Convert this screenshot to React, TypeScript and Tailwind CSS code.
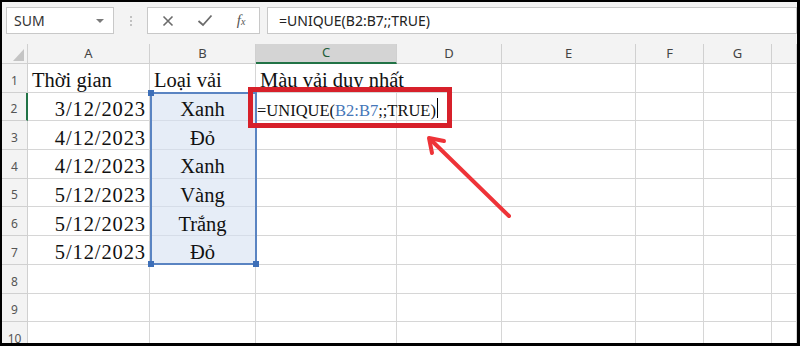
import React from "react";

const cols = [
  { key: "A", w: 122 },
  { key: "B", w: 106 },
  { key: "C", w: 141 },
  { key: "D", w: 105 },
  { key: "E", w: 134 },
  { key: "F", w: 68 },
  { key: "G", w: 68 },
  { key: "", w: 25 },
];

const data: [string, string][] = [
  ["3/12/2023", "Xanh"],
  ["4/12/2023", "Đỏ"],
  ["4/12/2023", "Xanh"],
  ["5/12/2023", "Vàng"],
  ["5/12/2023", "Trắng"],
  ["5/12/2023", "Đỏ"],
];

const serif = "font-['Liberation_Serif','Times_New_Roman',serif]";
const sans = "font-['Noto_Sans','Open_Sans',sans-serif]";

function Toolbar() {
  return (
    <div className="flex h-[42px] shrink-0 items-start gap-0 bg-[#f3f3f3] pt-[5px]">
      {/* Name box */}
      <div className="ml-[4px] flex h-[27px] w-[108px] items-center justify-between border border-[#c8c8c8] bg-white pl-[7px] pr-[8px]">
        <span className={`${sans} text-[14px] text-[#333]`}>SUM</span>
        <svg width="10" height="6" viewBox="0 0 10 6">
          <path d="M1 1 L5 5 L9 1 Z" fill="#7a7a7a" />
        </svg>
      </div>
      {/* separator */}
      <div className="flex h-[27px] w-[33px] flex-col items-center justify-center gap-[2px]">
        <span className="h-[2px] w-[2px] rounded-full bg-[#b0b0b0]" />
        <span className="h-[2px] w-[2px] rounded-full bg-[#b0b0b0]" />
        <span className="h-[2px] w-[2px] rounded-full bg-[#b0b0b0]" />
      </div>
      {/* Cancel / enter / fx */}
      <div className="flex h-[27px] w-[113px] items-center border border-[#c8c8c8] bg-white">
        <div className="flex w-[38px] justify-center pl-[2px]">
          <svg width="12" height="12" viewBox="0 0 12 12">
            <path d="M1.5 1.5 L10.5 10.5 M10.5 1.5 L1.5 10.5" stroke="#6b6b6b" strokeWidth="1.6" />
          </svg>
        </div>
        <div className="flex w-[38px] justify-center">
          <svg width="16" height="13" viewBox="0 0 16 13">
            <path d="M1.5 7 L6 11 L14.5 1.5" stroke="#6b6b6b" strokeWidth="1.8" fill="none" />
          </svg>
        </div>
        <div className="flex w-[36px] justify-center">
          <span className={`${serif} italic text-[15px] text-[#555]`}>
            f<span className="text-[10px]">x</span>
          </span>
        </div>
      </div>
      {/* Formula input */}
      <div className="ml-[7px] flex h-[27px] flex-1 items-center border border-[#c8c8c8] bg-white pl-[11px]">
        <span className={`${sans} text-[14px] text-[#222]`}>=UNIQUE(B2:B7;;TRUE)</span>
      </div>
    </div>
  );
}

function Sheet() {
  const rowH = "h-[28.7px]";
  return (
    <div className="relative flex-1 overflow-hidden bg-white">
      {/* column header row */}
      <div className="flex h-[20px] bg-[#f3f3f3]">
        <div className="relative w-[26px] shrink-0 border-r border-b border-[#d0d0d0]">
          <svg className="absolute bottom-[2px] right-[3px]" width="11" height="12" viewBox="0 0 11 12">
            <path d="M11 0 L11 12 L0 12 Z" fill="#c4c4c4" />
          </svg>
        </div>
        {cols.map((c, i) => (
          <div
            key={i}
            style={{ width: c.w }}
            className={`flex shrink-0 items-center justify-center border-r ${sans} text-[13px] ${
              c.key === "C"
                ? "border-b-2 border-r-[#d0d0d0] border-b-[#217346] bg-[#d4d4d4] text-[#1f5e3a]"
                : "border-b border-[#d0d0d0] text-[#444]"
            }`}
          >
            {c.key}
          </div>
        ))}
      </div>

      {Array.from({ length: 10 }, (_, r) => {
        const n = r + 1;
        return (
          <div key={n} className={`flex ${rowH}`}>
            <div
              className={`flex w-[26px] shrink-0 items-end justify-center border-b border-[#d0d0d0] bg-[#f3f3f3] pb-[5px] ${sans} text-[12px] leading-none text-[#555] ${
                n === 2 ? "border-r-2 border-r-[#217346]" : "border-r border-r-[#d0d0d0]"
              }`}
            >
              {n}
            </div>
            {cols.map((c, i) => {
              let content: React.ReactNode = null;
              let align = "justify-start pl-[4px]";
              let extra = "";
              if (n === 1 && c.key === "A") content = "Thời gian";
              if (n === 1 && c.key === "B") content = "Loại vải";
              if (n === 1 && c.key === "C") content = "Màu vải duy nhất";
              if (n >= 2 && n <= 7 && c.key === "A") {
                content = <span className="tracking-[0.9px]">{data[n - 2][0]}</span>;
                align = "justify-end pr-[3px]";
              }
              if (n >= 2 && n <= 7 && c.key === "B") {
                content = data[n - 2][1];
                align = "justify-center";
                extra = "bg-[#e6edf7] border-b-[#d6dde8]";
              }
              if (n === 2 && c.key === "C") {
                content = (
                  <span className="flex items-end text-[16.5px]">
                    =UNIQUE(<span className="text-[#4677b8]">B2:B7</span>;;TRUE)
                    <span className="mb-[1px] ml-[1px] inline-block h-[20px] w-[1px] bg-black" />
                  </span>
                );
                align = "justify-start pl-[1px]";
              }
              const noRight = n === 1 && c.key === "C";
              return (
                <div
                  key={i}
                  style={{ width: c.w }}
                  className={`flex shrink-0 items-end whitespace-nowrap border-b border-[#d6d6d6] pb-[1px] ${serif} text-[20.5px] leading-none text-[#111] ${align} ${extra} ${
                    noRight ? "" : "border-r border-r-[#d6d6d6]"
                  }`}
                >
                  {content}
                </div>
              );
            })}
          </div>
        );
      })}

      {/* reference range highlight B2:B7 */}
      <div className="pointer-events-none absolute left-[148px] top-[48.2px] h-[173px] w-[107px] border-2 border-[#5a84c2]">
        <span className="absolute -left-[4px] -top-[4px] h-[6px] w-[6px] bg-[#3d6fb8]" />
        <span className="absolute -bottom-[4px] -left-[4px] h-[6px] w-[6px] bg-[#3d6fb8]" />
        <span className="absolute -bottom-[4px] -right-[4px] h-[6px] w-[6px] bg-[#3d6fb8]" />
      </div>
    </div>
  );
}

export default function App() {
  return (
    <div className="relative h-[346px] w-[800px] bg-black pb-[3px] pl-[2px] pr-[3px] pt-[2px]">
      <div className="flex h-full w-full flex-col overflow-hidden bg-white">
        <Toolbar />
        <Sheet />
      </div>

      {/* red callout box */}
      <div className="pointer-events-none absolute left-[248px] top-[87px] h-[41px] w-[204px] border-[5px] border-[#d7202a]" />

      {/* arrow */}
      <svg className="pointer-events-none absolute left-0 top-0" width="800" height="346" viewBox="0 0 800 346">
        <g stroke="#ee3338" strokeWidth="4" strokeLinecap="round" strokeLinejoin="round" fill="none">
          <line x1="509" y1="216" x2="430" y2="139" />
          <polyline points="432,153 429,138 444,141" />
        </g>
      </svg>
    </div>
  );
}
